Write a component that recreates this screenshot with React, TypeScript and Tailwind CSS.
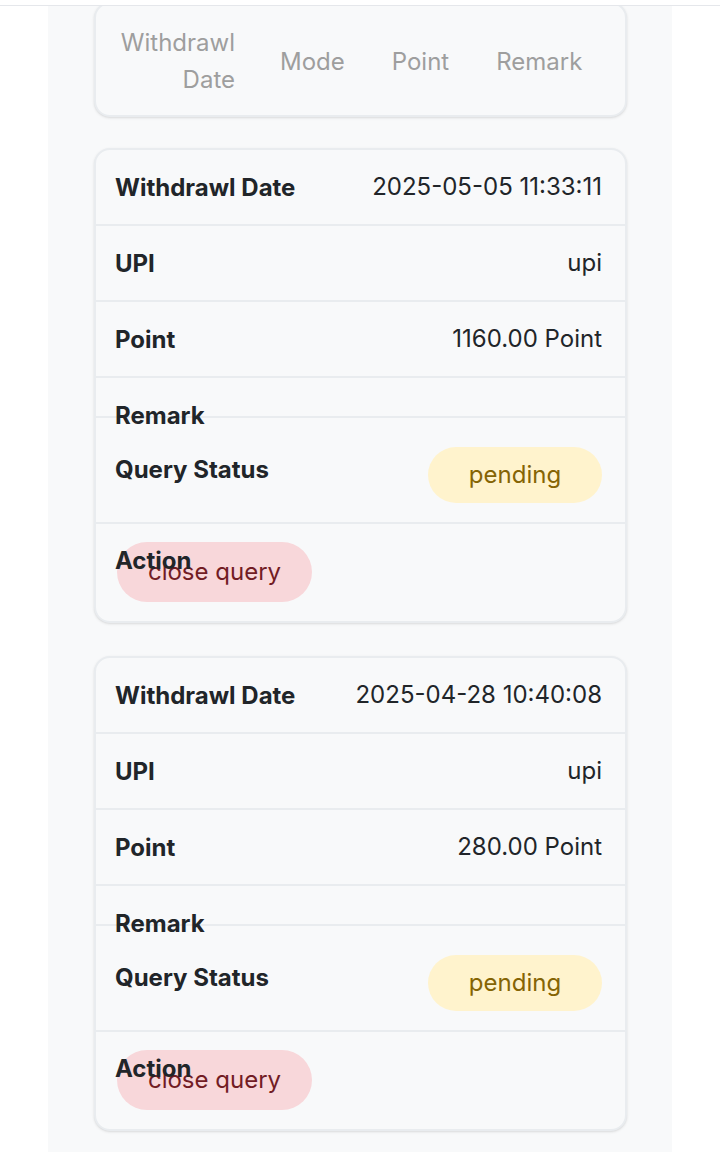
import React from "react";

type Withdrawal = {
  date: string;
  mode: string;
  point: string;
  remark: string;
  status: string;
};

const rows: Withdrawal[] = [
  { date: "2025-05-05 11:33:11", mode: "upi", point: "1160.00 Point", remark: "", status: "pending" },
  { date: "2025-04-28 10:40:08", mode: "upi", point: "280.00 Point", remark: "", status: "pending" },
];

function Row({ label, children }: { label: string; children?: React.ReactNode }) {
  return (
    <div className="relative flex h-[76px] items-center justify-end border-b-2 border-[#e9ecef] pl-[20px] pr-[23px]">
      <span className="absolute left-[19px] top-[20px] font-bold leading-[36px] text-[#212529]">{label}</span>
      <span className="leading-[36px] text-[#212529]">{children}</span>
    </div>
  );
}

function WithdrawCard({ item }: { item: Withdrawal }) {
  return (
    <div className="overflow-hidden rounded-[16px] border-2 border-[#e9ecef] bg-[#f8f9fa] shadow-sm">
      <Row label="Withdrawl Date">{item.date}</Row>
      <Row label="UPI">{item.mode}</Row>
      <Row label="Point">{item.point}</Row>
      {/* empty remark collapses, label spills over */}
      <div className="relative h-[40px] border-b-2 border-[#e9ecef]">
        <span className="absolute left-[19px] top-[20px] z-10 font-bold leading-[36px] text-[#212529]">Remark</span>
      </div>
      <div className="relative flex h-[106px] items-start justify-end border-b-2 border-[#e9ecef] pr-[23px] pt-[29px]">
        <span className="absolute left-[19px] top-[34px] font-bold leading-[36px] text-[#212529]">Query Status</span>
        <span className="flex h-[56px] w-[174px] items-center justify-center rounded-full bg-[#fff3cd] text-[#856404]">
          {item.status}
        </span>
      </div>
      <div className="relative h-[97px] pl-[21px] pt-[18px]">
        <span className="absolute left-[19px] top-[19px] z-10 font-bold leading-[36px] text-[#212529]">Action</span>
        <button className="flex h-[60px] w-[195px] items-center justify-center rounded-full bg-[#f8d7da] text-[#721c24]">
          close query
        </button>
      </div>
    </div>
  );
}

export default function App() {
  return (
    <div className="min-h-[1152px] bg-white text-[24px]" style={{ fontFamily: "Inter, 'Noto Sans', sans-serif" }}>
      <div className="h-[6px] border-b border-[#e5e7eb] bg-white" />
      <div className="mx-12 h-[1146px] overflow-hidden bg-[#f8f9fa] pl-[46px] pr-[45px]">
        <div className="-mt-[4px] flex flex-col gap-[33px]">
          <div className="-mb-[2px] flex items-center rounded-[16px] border-2 border-[#e9ecef] bg-[#f8f9fa] pb-[17px] pt-[20px] text-[#9e9e9e] shadow-sm">
            <div className="w-[161px] px-[22px] text-right leading-[37px]">Withdrawl Date</div>
            <div className="px-[23px] leading-[37px]">Mode</div>
            <div className="px-[24px] leading-[37px]">Point</div>
            <div className="px-[23px] leading-[37px]">Remark</div>
          </div>
          {rows.map((r, i) => (
            <WithdrawCard key={i} item={r} />
          ))}
        </div>
      </div>
    </div>
  );
}
